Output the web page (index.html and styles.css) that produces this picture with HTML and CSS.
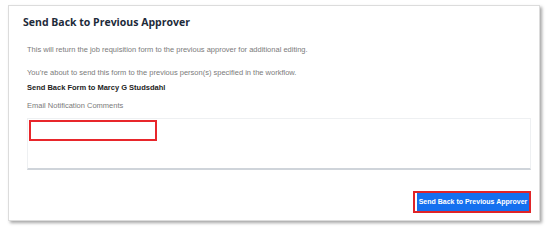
FILE: index.html
```html
<!DOCTYPE html>
<html>
<head>
<meta charset="utf-8">
<link rel="stylesheet" href="styles.css">
</head>
<body>
<div class="card">
  <h2 class="title">Send Back to Previous Approver</h2>
  <div class="content">
    <p class="note first">This will return the job requisition form to the previous approver for additional editing.</p>
    <p class="note second">You’re about to send this form to the previous person(s) specified in the workflow.</p>
    <p class="target">Send Back Form to Marcy G Studsdahl</p>
    <p class="note label">Email Notification Comments</p>
    <div class="comments">
      <div class="highlight"></div>
    </div>
    <div class="actions">
      <div class="btn-outline"><button class="btn">Send Back to Previous Approver</button></div>
    </div>
  </div>
</div>
</body>
</html>
```

FILE: styles.css
```css
html, body {
  margin: 0;
  padding: 0;
  background: #ffffff;
}
body {
  width: 548px;
  height: 233px;
  overflow: hidden;
  font-family: "Liberation Sans", Arial, sans-serif;
}
.card {
  box-sizing: border-box;
  margin: 5px 0 0 8px;
  width: 532px;
  height: 216px;
  border: 1px solid #dcdcdc;
  box-shadow: 2px 2px 3px rgba(0, 0, 0, 0.35);
  background: #fff;
}
.title {
  margin: 0;
  padding: 8px 0 0 14px;
  font-family: "Open Sans", "Liberation Sans", sans-serif;
  font-weight: 700;
  font-size: 10.5px;
  line-height: 16px;
  color: #1d2b3a;
}
.content {
  padding: 0 8px 0 18px;
}
.note {
  margin: 0;
  font-size: 7.5px;
  line-height: 10px;
  color: #7b7b7b;
}
.first { margin-top: 15px; }
.second { margin-top: 13px; }
.target {
  margin: 5px 0 0;
  font-size: 7.5px;
  line-height: 10px;
  font-weight: 700;
  color: #222;
}
.label { margin-top: 8px; }
.comments {
  position: relative;
  box-sizing: border-box;
  margin-top: 7px;
  height: 52px;
  border: 1px solid #eef0f2;
  border-bottom: 2px solid #cfd4da;
}
.highlight {
  position: absolute;
  left: 1px;
  top: 1px;
  width: 128px;
  height: 21px;
  box-sizing: border-box;
  border: 2px solid #e8262b;
}
.actions {
  display: flex;
  justify-content: flex-end;
  margin-top: 21px;
}
.btn-outline {
  border: 2px solid #e02428;
  display: flex;
}
.btn {
  box-sizing: border-box;
  height: 18px;
  width: 114px;
  padding: 0;
  border: 0;
  border-left: 2px solid #fff;
  background: #1570ef;
  color: #fff;
  font-family: "Liberation Sans", Arial, sans-serif;
  font-weight: 700;
  font-size: 7px;
  line-height: 18px;
}
```
